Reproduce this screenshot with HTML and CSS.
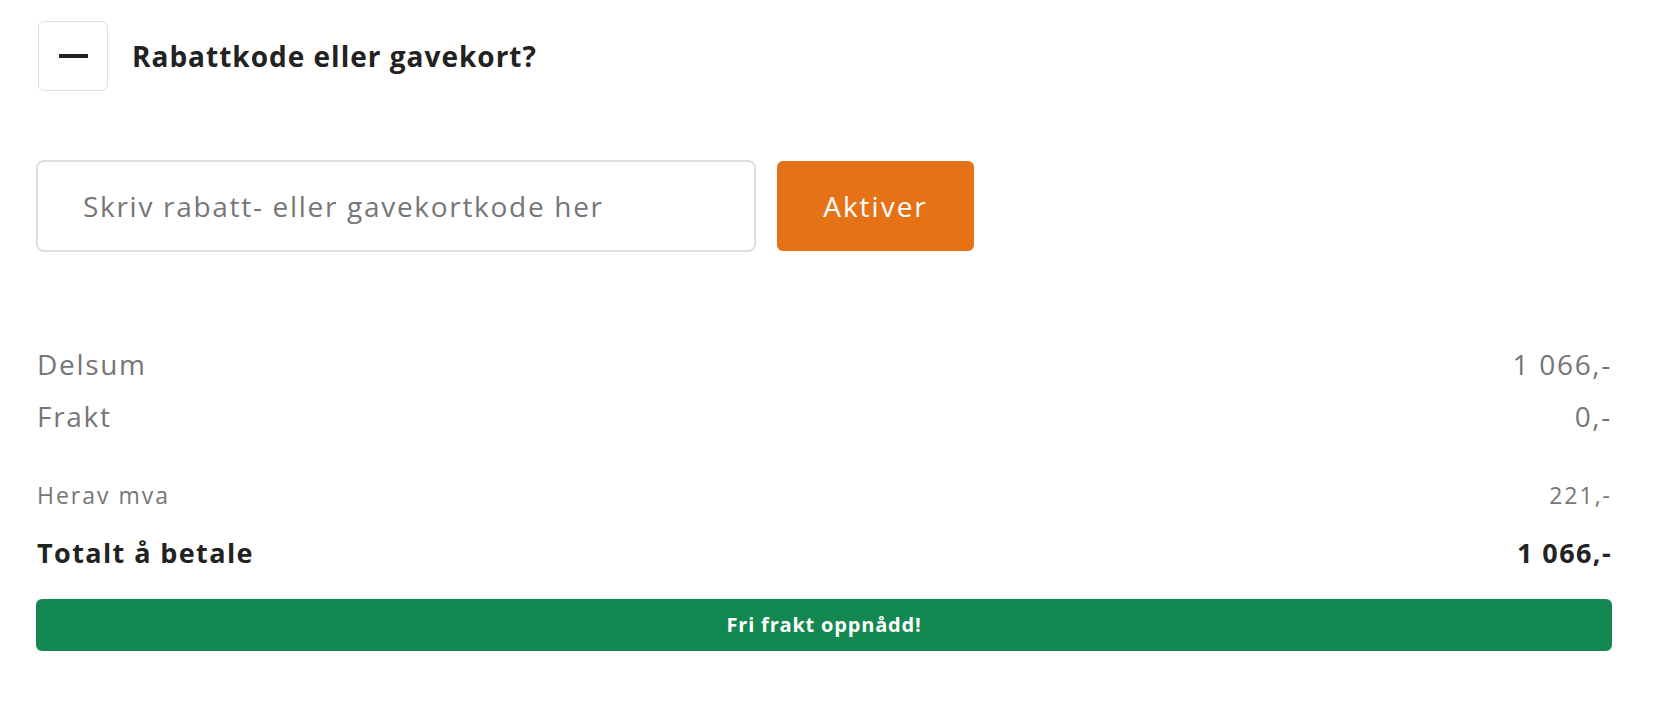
FILE: index.html
```html
<!DOCTYPE html>
<html lang="no">
<head>
    <meta charset="UTF-8">
    <meta name="viewport" content="width=device-width, initial-scale=1.0">
    <title>Handlekurv - sammendrag</title>
    <link rel="stylesheet" href="styles.css">
</head>
<body>

    <div class="cart-summary">

        <div class="discount-toggle">
            <button type="button" class="toggle-btn" aria-label="Skjul rabattkode">
                <span class="minus"></span>
            </button>
            <h2>Rabattkode eller gavekort?</h2>
        </div>

        <form class="discount-form">
            <input type="text" id="rabattkode" placeholder="Skriv rabatt- eller gavekortkode her">
            <button type="submit">Aktiver</button>
        </form>

        <div class="totals">
            <div class="row">
                <span>Delsum</span>
                <span>1 066,-</span>
            </div>
            <div class="row">
                <span>Frakt</span>
                <span>0,-</span>
            </div>
            <div class="row small">
                <span>Herav mva</span>
                <span>221,-</span>
            </div>
            <div class="row total">
                <span>Totalt å betale</span>
                <span>1 066,-</span>
            </div>
        </div>

        <div class="free-shipping">Fri frakt oppnådd!</div>

    </div>

</body>
</html>
```

FILE: styles.css
```css
body {
    font-family: "Open Sans", Arial, sans-serif;
    margin: 0;
    padding: 0;
    background-color: #fff;
    color: #222;
}

.cart-summary {
    width: 1576px;
    padding-left: 36px;
}

.discount-toggle {
    display: flex;
    align-items: center;
    gap: 24px;
    margin-top: 21px;
    padding-left: 2px;
}

.toggle-btn {
    width: 70px;
    height: 70px;
    border: 1px solid #ddd;
    border-radius: 6px;
    background-color: #fff;
    display: flex;
    align-items: center;
    justify-content: center;
    padding: 0;
    cursor: pointer;
}

.minus {
    display: block;
    width: 29px;
    height: 4px;
    background-color: #222;
}

h2 {
    margin: 0;
    font-size: 28px;
    font-weight: 700;
    letter-spacing: 1px;
    color: #222;
}

.discount-form {
    display: flex;
    align-items: center;
    gap: 21px;
    margin-top: 69px;
}

.discount-form input {
    box-sizing: border-box;
    width: 720px;
    height: 92px;
    padding: 0 45px;
    border: 2px solid #e0e0e0;
    border-radius: 8px;
    font-family: inherit;
    font-size: 28px;
    letter-spacing: 1.7px;
    color: #222;
}

.discount-form input::placeholder {
    color: #767676;
}

.discount-form button {
    width: 197px;
    height: 90px;
    border: none;
    border-radius: 6px;
    background-color: #e57217;
    color: #fff;
    font-family: inherit;
    font-size: 28px;
    letter-spacing: 2px;
    cursor: pointer;
}

.totals {
    margin-top: 86px;
    padding-left: 1px;
}

.row {
    display: flex;
    justify-content: space-between;
    font-size: 28px;
    letter-spacing: 1.7px;
    line-height: 52px;
    color: #767676;
}

.row.small {
    font-size: 23px;
    letter-spacing: 2px;
    margin-top: 27px;
}

.row.total {
    font-size: 27px;
    font-weight: 700;
    letter-spacing: 1.4px;
    color: #222;
    margin-top: 6px;
}

.free-shipping {
    margin-top: 20px;
    height: 52px;
    line-height: 52px;
    border-radius: 6px;
    background-color: #138851;
    color: #fff;
    text-align: center;
    font-size: 20px;
    font-weight: 700;
    letter-spacing: 0.8px;
}
```
